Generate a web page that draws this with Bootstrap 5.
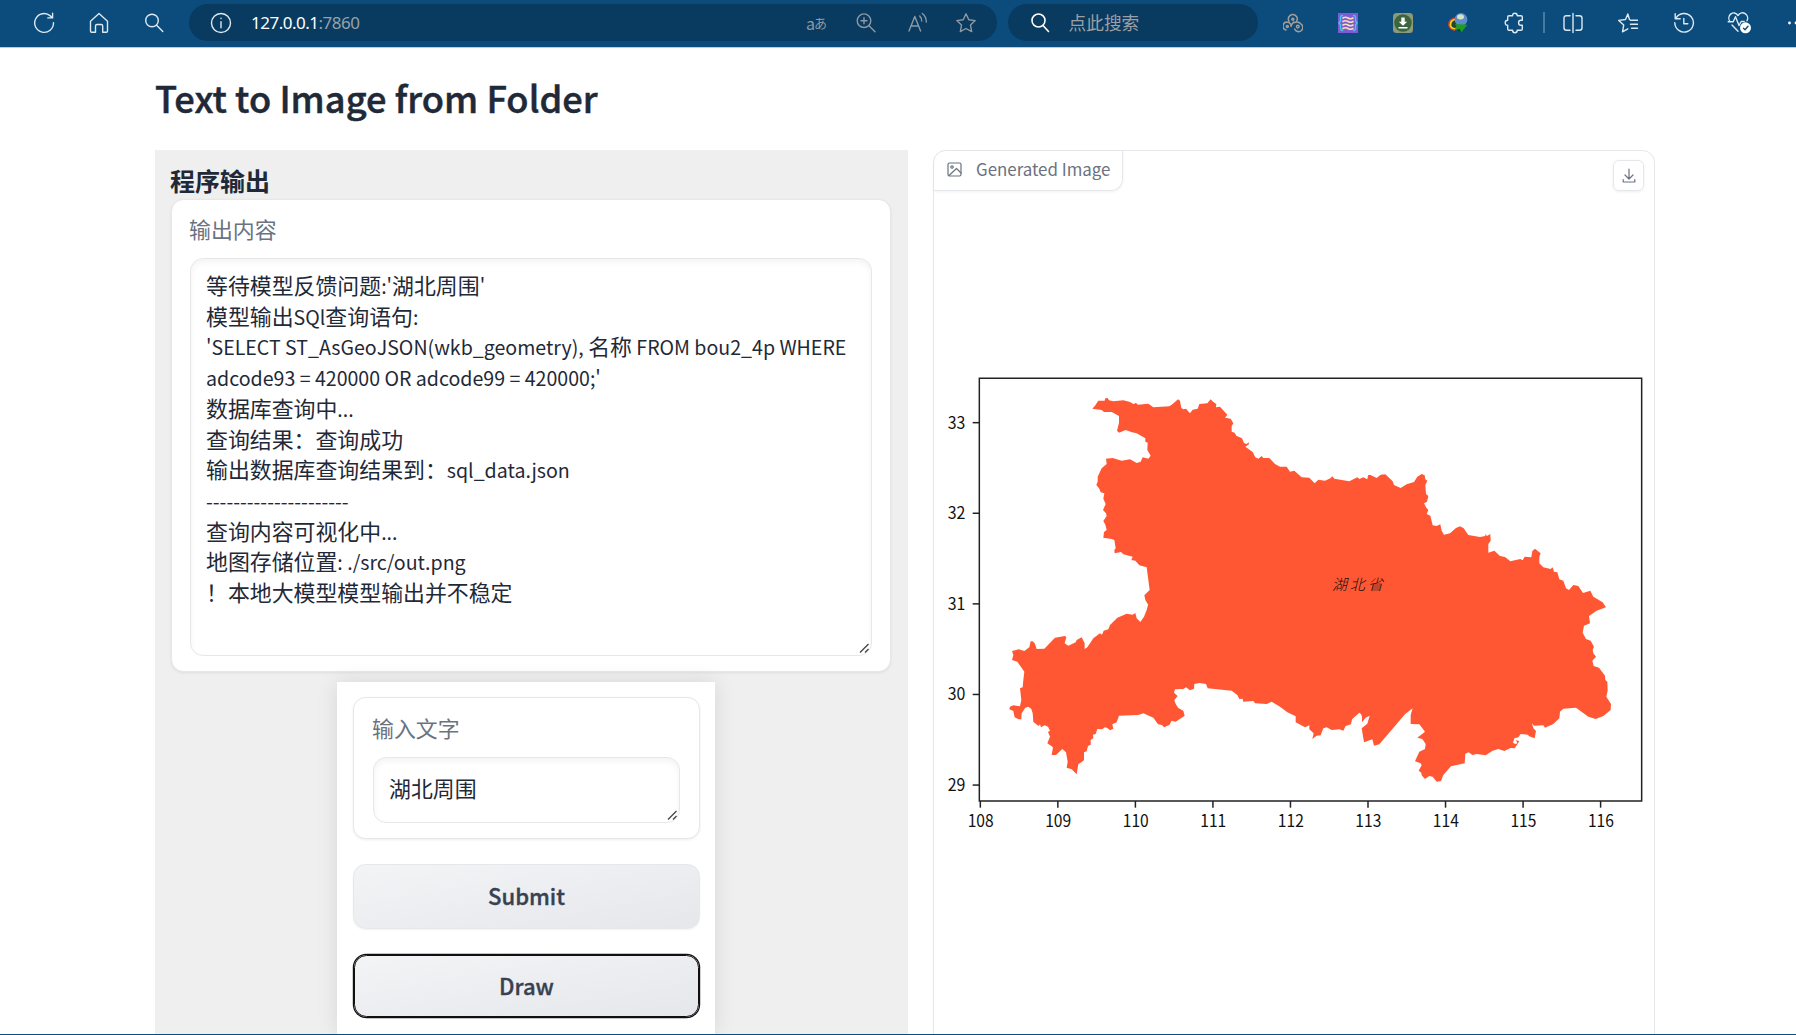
<!DOCTYPE html>
<html lang="zh-CN">
<head>
<meta charset="utf-8">
<meta name="viewport" content="width=device-width, initial-scale=1">
<title>Text to Image from Folder</title>
<link href="https://cdn.jsdelivr.net/npm/bootstrap@5.3.0/dist/css/bootstrap.min.css" rel="stylesheet">
<style>
  html, body { height: 1035px; overflow: hidden; }
  body { font-family: "Noto Sans CJK SC", sans-serif; color: #1f2937; background: #fff; }
  svg { display: block; flex: none; }
  .chrome-bar { height: 48px; background: #0b4c7d; border-bottom: 1px solid #b8cddb; padding: 0 0 2px 16.5px; color: #dde9f2; overflow: hidden; }
  .chrome-bar svg { fill: none; stroke: currentColor; stroke-width: 1.4; stroke-linecap: round; stroke-linejoin: round; }
  .tool-cell { width: 55px; flex: none; display: flex; justify-content: center; }
  .tool-cell.wide { width: 55.5px; }
  .pill { height: 37px; background: #093a5f; border-radius: 19px; flex: none; }
  .address { width: 808px; margin-left: 7.5px; padding: 0 6px 0 21px; }
  .address .url { margin-left: 19px; font: 17px/24px "Noto Sans", sans-serif; letter-spacing: -.5px; color: #fff; }
  .address .url span { color: #98a1a8; }
  .address .tool-cell { width: 50px; color: #8c9aa5; }
  .address .translate { font-size: 16px; line-height: 22px; letter-spacing: -1px; }
  .address .translate small { font-size: 13px; }
  .finder { width: 250.5px; margin-left: 10.5px; padding-left: 22px; color: #fff; }
  .finder span { margin-left: 19px; font-size: 17.7px; color: #9aa0a5; }
  .bar-sep { width: 1.5px; height: 21px; margin-left: 2.5px; margin-right: .5px; background: #48799e; flex: none; }
  .app { height: 986px; padding: 0 141px 0 155px; }
  .app h1 { font-size: 36.2px; line-height: 52px; font-weight: 500; margin: 0; padding-top: 23px; height: 102px; -webkit-text-stroke: .5px #1f2937; letter-spacing: .05px; }
  .out-col { width: 753px; height: 884px; background: #efefef; padding: 13px 17px 0 16px; }
  .out-col h2 { font-size: 25px; line-height: 35px; font-weight: 700; margin: 0 0 0 -1px; height: 36px; }
  .block { background: #fff; border: 1px solid #e5e7eb; border-radius: 12.5px; box-shadow: 0 1px 3px rgba(0,0,0,.07); }
  .field-label { font-size: 21.9px; line-height: 31px; color: #6b7280; margin-left: -1px; }
  .field { border: 1px solid #e5e7eb; border-radius: 13px; box-shadow: inset 0 3px 6px rgba(0,0,0,.05); font-size: 21.9px; line-height: 30.72px; position: relative; }
  .field p { margin: 0; height: 30.72px; white-space: pre; }
  .lat { font-size: 19.58px; line-height: 1; }
  .grip { position: absolute; right: 1px; bottom: 1px; }
  .out-block { height: 473px; padding: 13px 18px; }
  .out-block .field { height: 398px; margin-top: 14px; padding: 11px 15px; }
  .in-col { width: 378px; height: 353px; margin: 10px 0 0 166px; background: #fff; padding: 15px 15px 0 16px; box-shadow: 0 0 20px rgba(0,0,0,.1); }
  .in-block { height: 142px; padding: 14px 19px; flex: none; }
  .in-block .field { height: 66px; margin-top: 14px; padding: 15px 15px; }
  .act { height: 65px; border: 1px solid #e5e7eb; border-radius: 12.5px; background: linear-gradient(to bottom right, #f3f4f6, #e5e7eb); color: #374151; font-size: 22.1px; font-weight: 500; -webkit-text-stroke: .35px #374151; line-height: 1; box-shadow: 0 1px 2px rgba(0,0,0,.05); padding: 0 0 2px; flex: none; margin-top: 25px; }
  .act.on { height: 62px; border: 1px solid #101010; box-shadow: 0 0 0 1.2px #101010; margin: 26px 1px 0; }
  .img-col { width: 722px; height: 900px; margin-left: 25px; background: #fff; border: 1px solid #e5e7eb; border-radius: 12.5px; }
  .tab-label { height: 40px; width: 189px; border: solid #e5e7eb; border-width: 0 1px 1px 0; border-radius: 12px 0 12px 0; color: #6b7280; font-size: 16.9px; padding: 0 0 4px 13px; box-shadow: 0 1px 3px rgba(0,0,0,.06); }
  .tab-label svg, .save-btn svg { fill: none; stroke: #6b7280; stroke-width: 1.2; stroke-linecap: round; stroke-linejoin: round; }
  .tab-label svg { position: relative; top: 1px; }
  .save-btn { width: 31px; height: 31px; border: 1px solid #e5e7eb; border-radius: 6px; margin: 9px 10px 0 0; display: flex; align-items: center; justify-content: center; box-shadow: 0 1px 3px rgba(0,0,0,.07); }
  .plot { margin-top: 176px; }
  .plot text { font-family: "Noto Sans CJK SC", sans-serif; font-size: 51px; fill: #111; }
  .plot .province { font-size: 45px; font-weight: 300; font-style: italic; }
  .foot { height: 1px; background: #0b4c7d; }
</style>
<script src="https://cdn.jsdelivr.net/npm/bootstrap@5.3.0/dist/js/bootstrap.bundle.min.js"></script>
</head>
<body>
<header class="chrome-bar d-flex align-items-center">
  <div class="tool-cell"><svg width="22" height="22" viewBox="0 0 22 22"><path d="M20.5 10.6a9.4 9.4 0 1 1-3.2-6.7l2 1.8M19.6 1.2v4.7h-4.8"/></svg></div>
  <div class="tool-cell"><svg width="22" height="22" viewBox="0 0 22 22"><path d="M2.500 9.200 11 1.600l8.500 7.600V19q0 1.200-1.200 1.200h-3.600V14q0-1.500-1.500-1.500H9q-1.500 0-1.500 1.500v6.200H3.700q-1.200 0-1.200-1.200z"/></svg></div>
  <div class="tool-cell"><svg width="22" height="22" viewBox="0 0 22 22"><circle cx="9" cy="8.500" r="6.300"/><path d="m13.600 13.200 6.200 6.200"/></svg></div>
  <div class="pill address d-flex align-items-center">
    <svg width="22" height="22" viewBox="0 0 22 22"><circle cx="11" cy="11" r="9.500"/><path d="M11 9.800v6M11 6.300v.3"/></svg>
    <div class="url me-auto">127.0.0.1<span>:7860</span></div>
    <div class="tool-cell translate">a<small>あ</small></div>
    <div class="tool-cell"><svg width="22" height="22" viewBox="0 0 22 22"><circle cx="9" cy="8.700" r="6.800"/><path d="m14 13.800 6 6M9 5.700v6M6 8.700h6"/></svg></div>
    <div class="tool-cell ps-1"><svg width="22" height="22" viewBox="0 0 22 22"><path d="M2 19 7.800 4.500 13.600 19M4 14h7.600M12.700 4q2 2 2 5M15.300 1.500q4 3 4 8.500"/></svg></div>
    <div class="tool-cell"><svg width="22" height="22" viewBox="0 0 22 22"><path d="m11 1.800 2.800 5.900 6.400.9-4.700 4.500 1.200 6.500-5.700-3.100-5.700 3.100 1.200-6.500L1.800 8.600l6.400-.9z"/></svg></div>
  </div>
  <div class="pill finder d-flex align-items-center">
    <svg width="20" height="22" viewBox="0 0 20 22" style="stroke-width:1.6"><circle cx="8.500" cy="8.500" r="6.500"/><path d="m13 13.500 5.500 6"/></svg>
    <span>点此搜索</span>
  </div>
  <div class="tool-cell" style="margin-left:7.5px;color:#a39e98"><svg width="20" height="20" viewBox="0 0 20 20" style="stroke-width:1.5"><path d="M6 8.200a4.400 4.400 0 1 1 7.600 0M3 17a4 4 0 1 1 5-3.500q.5-3 3-4.500M11.500 9.500q4-1.500 6.500 1.500a4.200 4.200 0 1 1-6.300 5"/><circle cx="9.800" cy="6.300" r="1"/><circle cx="4.300" cy="13.600" r="1"/><circle cx="14.800" cy="13.600" r="1.300"/></svg></div>
  <div class="tool-cell"><svg width="20" height="20" viewBox="0 0 20 20"><path d="M0 0h20v20H0z" fill="#7e5bd6" stroke="none"/><path d="M4.500 2.500q-2.200 0-2 2.500v3L1 10l1.500 2v3q-.2 2.500 2 2.500M15.500 2.500q2.200 0 2 2.500v3L19 10l-1.500 2v3q.2 2.500-2 2.500" stroke="#43c6ee"/><path d="M5 5q2.500-1.500 5 0t5 0M5 8.500q2.500-1.500 5 0t5 0M5 12q2.500-1.500 5 0t5 0M5 15.500q2.500-1.500 5 0t5 0" stroke="#f8dfb0" stroke-width="1.600"/></svg></div>
  <div class="tool-cell"><svg width="20" height="20" viewBox="0 0 20 20"><rect width="20" height="20" rx="3.500" fill="#8b9b78" stroke="none"/><circle cx="10" cy="10" r="8.700" fill="#3c653e" stroke="none"/><path d="M8.300 4.500h3.400v4.200h2.500L10 12.800 5.800 8.700h2.500zM5.500 14h9v1.600h-9z" fill="#fff" stroke="none"/></svg></div>
  <div class="tool-cell"><svg width="20" height="20" viewBox="0 0 20 20" style="stroke:none"><path d="M0 12Q0 5 8 4l5 6-6 8Q1 17 0 12z" fill="#c93f2b"/><path d="M1.500 12q0-6.500 7-6.500l3 5-5 6q-4.500-.5-5-4.500z" fill="#f2d02c"/><path d="M3.300 12q.2-4.500 5-5l3 4-4 4q-3.500 0-4-3z" fill="#27452d"/><circle cx="13" cy="6.500" r="6.400" fill="#5c8ccc"/><ellipse cx="12.500" cy="3.800" rx="3.500" ry="2.600" fill="#d9e3c0"/><path d="m7 11 12.500.8-6.500 8-1.500-3.500-5.500 1 3-3z" fill="#1d9d23"/><path d="m9 16.600 3-.3 1 3.500z" fill="#0a4212"/></svg></div>
  <div class="tool-cell ps-1"><svg width="22" height="22" viewBox="0 0 22 22"><path d="M5 3.700h3.600q0-2.500 2.300-2.500t2.300 2.500H17q1.300 0 1.300 1.300v3.200h-1.500q-2.200 0-2.200 2.500t2.200 2.600h1.500V17q0 1.300-1.300 1.300h-3.800q0 2.500-2.300 2.500t-2.300-2.500H5Q3.700 18.300 3.700 17v-3.700q-2.500 0-2.500-2.500t2.500-2.500V5Q3.700 3.700 5 3.700z"/></svg></div>
  <div class="bar-sep"></div>
  <div class="tool-cell wide"><svg width="22" height="22" viewBox="0 0 22 22"><path d="M8 3.700H4.500q-2.500 0-2.500 2.500v9.600q0 2.500 2.500 2.500H8M14 3.700h3.500q2.500 0 2.500 2.500v9.600q0 2.500-2.500 2.500H14M11 1.500v19"/></svg></div>
  <div class="tool-cell wide"><svg width="22" height="22" viewBox="0 0 22 22"><path d="M12.500 7.500 10.800 2 8.500 7.500l-6.800.9 5 4.700-1.200 6.700 5.300-3M13.500 8.200h7M13.500 12.200h7M14.500 16.200h6"/></svg></div>
  <div class="tool-cell wide"><svg width="22" height="22" viewBox="0 0 22 22"><path d="M3 6.200a9.300 9.300 0 1 1-1.200 4.600M2.200 1.800v5h5M10.800 6.500v5.300h4"/></svg></div>
  <div class="tool-cell wide"><svg width="24" height="23" viewBox="0 0 24 23"><path d="M2.800 10.500C-1 4.500 7-1.800 11 4.500 15-1.800 23 4 20 9.800M1.200 10.700h5l2.300-5 3.500 8.800 2.200-4h3M5 14l6 6.300"/><circle cx="18.500" cy="16.800" r="5.500" fill="#fff" stroke="none"/><path d="m16.500 17.200 1.500 1.500 3-3.500" stroke="#0b4c7d"/></svg></div>
  <div class="tool-cell wide ps-2"><svg width="22" height="22" viewBox="0 0 22 22" style="fill:#fff;stroke:none"><circle cx="1.500" cy="11" r="1.400"/><circle cx="8" cy="11" r="1.400"/><circle cx="14.500" cy="11" r="1.400"/></svg></div>
</header>

<main class="app overflow-hidden">
  <h1>Text to Image from Folder</h1>
  <div class="d-flex">
    <section class="out-col flex-shrink-0">
      <h2>程序输出</h2>
      <div class="block out-block">
        <div class="field-label">输出内容</div>
        <div class="field">
          <p>等待模型反馈问题<span class="lat">:'</span>湖北周围<span class="lat">'</span></p>
          <p>模型输出<span class="lat">SQl</span>查询语句<span class="lat">:</span></p>
          <p><span class="lat">'SELECT ST_AsGeoJSON(wkb_geometry), </span>名称<span class="lat"> FROM bou2_4p WHERE</span></p>
          <p><span class="lat">adcode93 = 420000 OR adcode99 = 420000;'</span></p>
          <p>数据库查询中<span class="lat">...</span></p>
          <p>查询结果：查询成功</p>
          <p>输出数据库查询结果到：<span class="lat">sql_data.json</span></p>
          <p><span class="lat">---------------------</span></p>
          <p>查询内容可视化中<span class="lat">...</span></p>
          <p>地图存储位置<span class="lat">: ./src/out.png</span></p>
          <p>！本地大模型模型输出并不稳定</p>
          <svg class="grip" width="11" height="11" viewBox="0 0 11 11" fill="none" stroke="#444" stroke-width="1.300"><path d="M1 9.500 9.500 1M6 9.500l3.500-3.500"/></svg>
        </div>
      </div>
      <div class="in-col d-flex flex-column">
        <div class="block in-block">
          <div class="field-label">输入文字</div>
          <div class="field"><p>湖北周围</p><svg class="grip" width="11" height="11" viewBox="0 0 11 11" fill="none" stroke="#444" stroke-width="1.300"><path d="M1 9.500 9.500 1M6 9.500l3.500-3.500"/></svg></div>
        </div>
        <button class="btn act">Submit</button>
        <button class="btn act on">Draw</button>
      </div>
    </section>
    <section class="img-col flex-shrink-0">
      <div class="d-flex justify-content-between align-items-start" style="height:50px">
        <div class="tab-label d-flex align-items-center"><svg width="15" height="15" viewBox="0 0 15 15"><rect x="1" y="1" width="13" height="13" rx="1.500"/><circle cx="5" cy="5" r="1.200"/><path d="m2 13.500 7.500-7L14 11"/></svg><span style="margin-left:14px">Generated Image</span></div>
        <div class="save-btn"><svg width="14" height="16" viewBox="0 0 14 16"><path d="M7 1v9.500M3 7l4 4 4-4M1.200 11.500V14h11.600v-2.500"/></svg></div>
      </div>
      <svg class="plot" width="720" height="460" viewBox="12 21 2160 1380">
        <path id="hubei" fill="#ff5733"/>
        <g id="axes" fill="none" stroke="#222" stroke-width="4.500"><path d="M148 25H2135V1293H148z"/></g>
        <g id="labels"></g>
        <text class="province" x="1206" y="660" textLength="152">湖北省</text>
      </svg>
    </section>
  </div>
</main>
<div class="foot"></div>

<script>
  // Outline of the province, split in four tiles: [x offset, y offset, points]
  const tiles = [
    [0, 0, "487,116 496,106 505,92 524,92 526,85 533,84 537,91 550,94 580,91 600,96 610,102 618,99 624,104 655,101 670,112 718,109 728,102 744,88 750,92 754,114 760,118 768,116 780,130 788,119 803,116 808,102 832,100 842,88 850,96 859,102 858,112 870,110 892,134 885,143 902,146 910,160 905,168 905,185 914,188 919,197 936,205 942,219 950,222 956,217 957,223 946,230 968,246 976,262 985,266 995,258 1000,264 1018,264 1035,282"],
    [1050, 0, "0,290 20,290 30,305 43,302 65,322 88,323 104,340 115,329 135,332 151,325 157,319 163,326 208,334 232,322 238,327 250,322 262,328 264,316 270,314 290,324 302,314 316,313 338,334 342,345 362,354 380,343 402,336 412,320 425,312 434,316 436,328 442,332 436,345 438,372 445,378 441,395 432,400 438,412 445,420 440,432 451,437 458,466 470,468 481,463 485,482 492,494 510,490 528,474 540,469 551,475 565,495 600,501 616,498 616,492 621,498 631,492 632,512 625,522 625,548 643,542 660,558 675,561 691,574 721,567 728,571 734,560 754,562 757,543 765,536 782,550 778,560 778,580 790,592 812,597 818,592 822,605 832,607 838,628 850,632 858,655 867,660 880,645 895,648 909,669 931,662 940,680 968,697 978,712 950,722"],
    [1050, 690, "927,48 930,70 912,77 908,98 918,117 932,122 942,140 938,150 940,160 948,170 937,182 941,198 957,203 975,227 976,240 982,245 983,272 979,290 993,312 992,330 970,348 947,357 925,350 888,323 850,326 840,335 838,355 820,372 795,383 790,376 762,377 756,370 760,385 768,393 764,415 748,409 743,404 722,402 715,412 703,415 699,428 706,432 712,430 708,420 718,424 704,445 692,444 673,453 655,447 638,452 617,466 590,462 577,465 566,457 556,461 554,490 513,499 490,525 483,543 470,545 458,530 448,528 435,537 425,526 424,518 416,512 425,496 422,490 405,484 418,455 435,447 437,432 427,417 412,413 435,395 418,373 392,372 392,345 398,325 375,343 350,372 298,433 282,437 277,418 252,427 245,385 262,371 269,347 257,353 246,367 246,350 243,342 238,338 216,358 213,373 197,378 190,392 178,388 155,390 140,382 130,385 122,406 110,407 97,417 101,400 88,388 88,376 75,382 47,367 47,349 22,337 0,320"],
    [0, 690, "1025,305 1010,312 975,310 970,303 940,305 938,296 928,297 922,285 905,272 833,265 828,252 808,249 793,252 792,266 780,271 768,262 760,267 735,268 732,278 743,288 733,300 737,312 745,324 760,332 764,347 737,365 725,362 718,375 702,382 696,375 684,373 670,353 640,340 625,345 567,347 560,367 547,373 550,386 540,391 532,384 525,382 516,388 502,387 497,402 489,404 490,415 482,420 482,434 474,438 470,454 462,457 462,481 445,493 440,523 425,508 410,503 413,485 408,457 397,447 378,465 365,465 369,442 352,430 360,410 354,396 360,392 354,380 344,376 333,382 330,373 326,378 310,366 308,340 304,327 295,320 286,323 275,340 274,358 266,358 254,352 250,333 238,328 240,320 250,316 270,319 274,300 270,265 278,262 280,240 283,215 262,185 246,180 250,165 246,153 266,148 283,153 298,142 302,124 308,124 314,130 320,147 343,146 375,113 405,108 409,112 404,130 415,137 437,127 440,120 455,112 464,130 464,147 472,142 490,115 510,100 516,104 521,92 535,88 540,75 562,53 590,41 608,44 616,39 620,55 631,66 642,50 650,30 654,15"],
    [0, 0, "655,705 646,690 643,676 659,660 655,630 650,592 628,586 616,572 604,570 608,560 580,553 573,546 554,550 553,540 557,535 553,510 545,507 520,503 522,486 530,480 526,464 520,453 530,438 528,430 519,420 527,402 520,386 523,370 512,367 508,356 499,345 503,335 503,320 515,295 530,282 528,266 548,264 575,272 600,268 620,279 632,275 638,262 655,266 662,257 652,240 653,218 646,215 646,205 620,190 606,187 587,180 567,188 561,182 567,158 567,138 545,126 522,126 515,120"]
  ];
  const pts = tiles.flatMap(([dx, dy, s]) => s.split(" ").map(p => {
    const [x, y] = p.split(",").map(Number);
    return (x + dx) + " " + (y + dy);
  }));
  document.getElementById("hubei").setAttribute("d", "M" + pts.join("L") + "z");

  let ticks = "", labels = "";
  for (let i = 0; i < 9; i++) {
    const x = 151 + i * 232.6;
    ticks += `<path d="M${x} 1293v20"/>`;
    labels += `<text x="${x - 38}" y="1372" textLength="78" lengthAdjust="spacingAndGlyphs">${108 + i}</text>`;
  }
  for (let i = 0; i < 5; i++) {
    const y = 158 + i * 271.8;
    ticks += `<path d="M148 ${y}h-20"/>`;
    labels += `<text x="53" y="${y + 18}" textLength="53" lengthAdjust="spacingAndGlyphs">${33 - i}</text>`;
  }
  document.getElementById("axes").insertAdjacentHTML("beforeend", ticks);
  document.getElementById("labels").innerHTML = labels;
</script>
</body>
</html>
